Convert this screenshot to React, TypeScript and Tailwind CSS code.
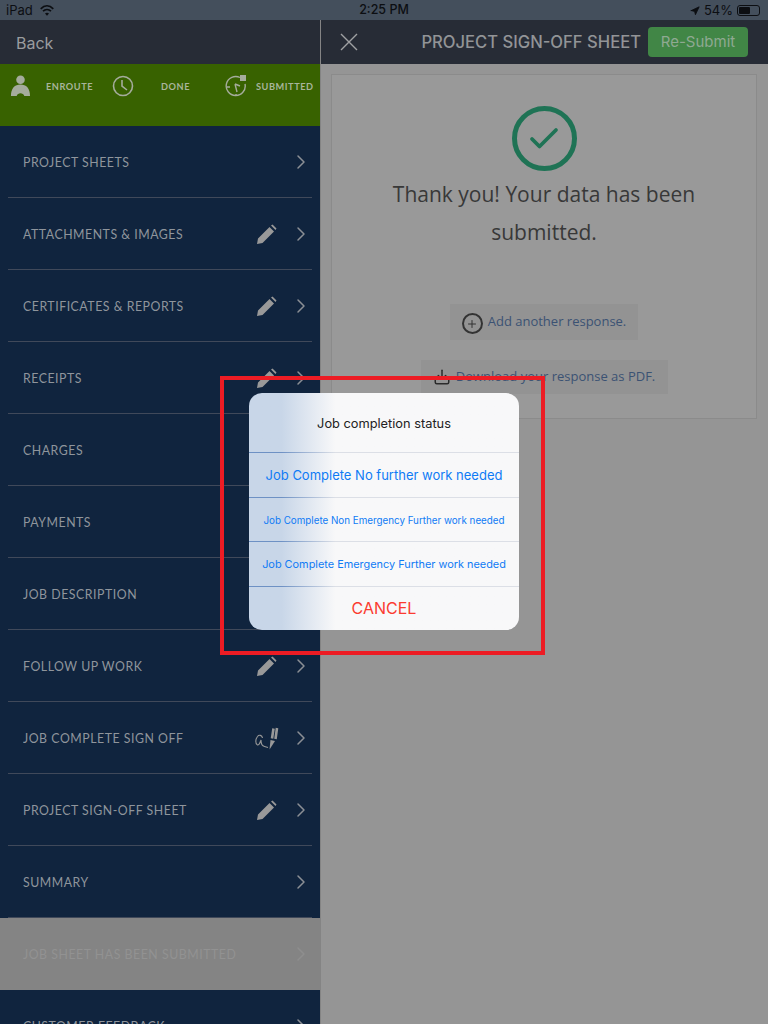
import { ChevronRight, Navigation, Plus, Download, Check } from "lucide-react";

const rows = [
  { label: "PROJECT SHEETS" },
  { label: "ATTACHMENTS & IMAGES", icon: "pen" },
  { label: "CERTIFICATES & REPORTS", icon: "pen" },
  { label: "RECEIPTS", icon: "pen" },
  { label: "CHARGES", icon: "pen" },
  { label: "PAYMENTS", icon: "pen" },
  { label: "JOB DESCRIPTION", icon: "pen" },
  { label: "FOLLOW UP WORK", icon: "pen" },
  { label: "JOB COMPLETE SIGN OFF", icon: "sign" },
  { label: "PROJECT SIGN-OFF SHEET", icon: "pen" },
  { label: "SUMMARY" },
];

const PenIcon = () => (
  <svg width="20" height="20" viewBox="0 0 20 20" className="text-[#999999]">
    <path d="M0 20 L1 14.5 L12.5 3 L17 7.5 L5.5 19 Z M14 1.5 L15.5 0.5 L19.5 4.5 L18.5 6 Z" fill="currentColor" />
  </svg>
);

const SignIcon = () => (
  <svg width="25" height="24" viewBox="0 0 25 24" fill="none" stroke="#999999">
    <path d="M7.5 12 C7 9 4 8.5 2.5 10.5 C0.5 13 0 18 2.5 19 C4.5 19.5 5.5 15 6 14 C6 17 7 20 9.5 20.5 L13 21.5" strokeWidth="1.1" />
    <path d="M14.5 23.5 L15.5 14 L20 15 Z" fill="#999999" stroke="none" />
    <path d="M17 12.5 L18.5 2.5 M20.5 13 L22 2" strokeWidth="2.6" />
  </svg>
);

const Divider = () => (
  <div className="h-px shrink-0 bg-gradient-to-r from-[#6e91c4] from-[12%] to-[#dcdfe6] to-[32%]" />
);

const Label = ({ text, muted }: { text: string; muted?: boolean }) => (
  <div className="flex-1 pb-[2px]">
    <span className={`inline-block origin-left scale-x-[0.88] whitespace-nowrap text-[14px] tracking-[0.6px] font-['Lato',sans-serif] ${muted ? "text-[#929292]" : "text-[#8f959c]"}`}>
      {text}
    </span>
  </div>
);

const Row = ({ label, icon }: { label: string; icon?: string }) => (
  <div className="h-[72px] shrink-0 flex items-center pl-[23px] pr-[7px] relative">
    <Label text={label} />
    {icon === "pen" && <div className="mr-[12px] flex"><PenIcon /></div>}
    {icon === "sign" && <div className="mr-[9px] flex"><SignIcon /></div>}
    <ChevronRight size={24} strokeWidth={1.5} className="text-[#8b8f95]" />
    <div className="absolute bottom-0 left-[8px] right-[8px] h-px bg-[#40495a]" />
  </div>
);

export default function App() {
  return (
    <div className="relative w-[768px] h-[1024px] overflow-hidden bg-[#959595] font-['Inter',sans-serif]">
      <div className="h-5 bg-[#444f5c] flex items-center justify-between px-[6px] pt-[1px] text-[13px] text-[#0c0e12]">
        <div className="flex items-center gap-[7px] w-[200px]">
          <span>iPad</span>
          <svg width="14" height="11" viewBox="0 0 14 11" fill="none" stroke="#0c0e12" strokeWidth="1.7">
            <path d="M0.7 3.8 C4.5 0 9.5 0 13.3 3.8" />
            <path d="M3 6.2 C5.3 4 8.7 4 11 6.2" />
            <path d="M7 10.8 L5 8.4 C6.2 7.4 7.8 7.4 9 8.4 Z" fill="#0c0e12" stroke="none" />
          </svg>
        </div>
        <span className="text-[12.5px] font-medium">2:25 PM</span>
        <div className="flex items-center justify-end gap-[4px] w-[200px] pr-[2px]">
          <Navigation size={10} fill="#0c0e12" />
          <span>54%</span>
          <div className="w-[23px] h-[11px] border border-[#0c0e12] rounded-[3px] p-px">
            <div className="w-[11px] h-full bg-[#0c0e12] rounded-[1px]" />
          </div>
        </div>
      </div>

      <div className="flex h-[1004px]">
        <div className="w-[321px] shrink-0 border-r border-[#848484] flex flex-col overflow-hidden">
          <div className="h-[44px] shrink-0 bg-[#272c36] flex items-center pl-4 pt-[1px] text-[16px] text-[#9a9c9f]">Back</div>
          <div className="h-[62px] shrink-0 bg-[#386200] flex items-start pt-[11px] pl-[10px] text-[10px] tracking-[0.6px] font-bold text-[#a8b59b] font-['Lato',sans-serif]">
            <svg width="21" height="21" viewBox="0 0 22 22" fill="#a5ac9c" className="shrink-0">
              <circle cx="11" cy="5" r="4.5" />
              <path d="M1 22 C1 14 5 10 11 10 C17 10 21 14 21 22 L15 22 C14 18 8 18 7 22 Z" />
            </svg>
            <span className="w-[81px] pl-[15px] mt-[4px]"><span className="inline-block origin-left scale-x-[0.92]">ENROUTE</span></span>
            <svg width="22" height="22" viewBox="0 0 22 22" fill="none" stroke="#a5ac9c" strokeWidth="1.6" className="shrink-0">
              <circle cx="11" cy="11" r="9.5" />
              <path d="M10 5 V11 L15 15" />
            </svg>
            <span className="w-[91px] pl-[27px] mt-[4px]"><span className="inline-block origin-left scale-x-[0.92]">DONE</span></span>
            <svg width="22" height="22" viewBox="0 0 22 22" fill="none" stroke="#a5ac9c" strokeWidth="1.4" className="shrink-0">
              <path d="M15 2.5 A9.5 9.5 0 1 0 20 9" />
              <path d="M10 9 L12 17 M10 9 L15 11 M2 12 H5 M11 19 V21" />
              <rect x="15" y="0" width="6" height="6" fill="#a5ac9c" stroke="none" />
            </svg>
            <span className="pl-[9px] mt-[4px] whitespace-nowrap"><span className="inline-block origin-left scale-x-[0.92]">SUBMITTED</span></span>
          </div>
          <div className="flex-1 bg-[#10243e] flex flex-col overflow-hidden">
            {rows.map((row) => (
              <Row key={row.label} label={row.label} icon={row.icon} />
            ))}
            <div className="h-[72px] shrink-0 bg-[#848484] flex items-center pl-[23px] pr-[7px]">
              <Label text="JOB SHEET HAS BEEN SUBMITTED" muted />
              <ChevronRight size={24} strokeWidth={1.5} className="text-[#8e8e8e]" />
            </div>
            <div className="h-[72px] shrink-0 flex items-center pl-[23px] pr-[7px]">
              <Label text="CUSTOMER FEEDBACK" />
              <ChevronRight size={24} strokeWidth={1.5} className="text-[#8b8f95]" />
            </div>
          </div>
        </div>

        <div className="flex-1 flex flex-col">
          <div className="h-[44px] shrink-0 bg-[#272c36] flex items-center pl-[19px] pr-[20px]">
            <svg width="18" height="18" viewBox="0 0 18 18" stroke="#a0a1a3" strokeWidth="1.4" className="shrink-0">
              <path d="M1 1 L17 17 M17 1 L1 17" />
            </svg>
            <span className="flex-1 text-right text-[16.6px] font-medium text-[#929497] mr-[7px]">PROJECT SIGN-OFF SHEET</span>
            <div className="w-[100px] h-[30px] rounded-[4px] bg-[#418646] flex items-center justify-center text-[15px] text-[#8fa992]">Re-Submit</div>
          </div>
          <div className="flex-1 px-[10px] pt-[10px]">
            <div className="w-[426px] h-[345px] bg-[#999999] border border-[#8b8b8b] flex flex-col items-center pt-[31px] font-['Open_Sans',sans-serif]">
              <div className="w-[65px] h-[65px] rounded-full border-[5px] border-[#1f7355] flex items-center justify-center">
                <Check size={36} strokeWidth={2.5} className="text-[#1f7355]" />
              </div>
              <p className="mt-[4px] w-[340px] text-center text-[21px] leading-[38px] text-[#383838]">Thank you! Your data has been submitted.</p>
              <div className="mt-[53px] h-[36px] w-[188px] bg-[#939393] flex items-center justify-center gap-[5px] text-[13px] text-[#3b5273]">
                <div className="w-[21px] h-[21px] mt-[3px] rounded-full border-2 border-[#333333] flex items-center justify-center">
                  <Plus size={12} strokeWidth={2} className="text-[#333333]" />
                </div>
                Add another response.
              </div>
              <div className="mt-[20px] h-[34px] w-[247px] bg-[#939393] flex items-center justify-center gap-[5px] text-[13px] text-[#3b5273]">
                <Download size={18} className="text-[#2b2b2b]" />
                Download your response as PDF.
              </div>
            </div>
          </div>
        </div>
      </div>

      {/* alert with the red marker round it */}
      <div className="absolute left-[220px] top-[376px] w-[325px] h-[279px] border-[4px] border-[#ed1c24]" />
      <div className="absolute left-[249px] top-[393px] w-[270px] h-[237px] rounded-[13px] overflow-hidden flex flex-col bg-gradient-to-r from-[#c8d6e8] from-[12%] to-[#f8f8f9] to-[32%] text-[#0f7bf5]">
        <div className="h-[59px] shrink-0 flex items-center justify-center pt-[2px] text-[12.8px] text-[#222222]">Job completion status</div>
        <Divider />
        <div className="h-[44px] shrink-0 flex items-center justify-center pt-[2px] text-[13px]">Job Complete No further work needed</div>
        <Divider />
        <div className="h-[43px] shrink-0 flex items-center justify-center pt-[3px] text-[9.8px]">Job Complete Non Emergency Further work needed</div>
        <Divider />
        <div className="h-[44px] shrink-0 flex items-center justify-center text-[10.9px]">Job Complete Emergency Further work needed</div>
        <Divider />
        <div className="flex-1 flex items-center justify-center pb-[1px] text-[16px] text-[#fb3b30]">CANCEL</div>
      </div>
    </div>
  );
}
